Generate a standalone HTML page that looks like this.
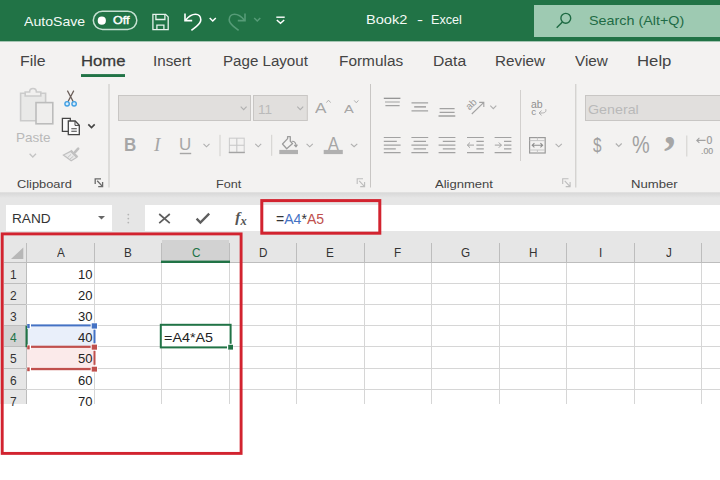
<!DOCTYPE html>
<html lang="en">
<head>
<meta charset="utf-8">
<title>Book2 - Excel</title>
<style>
html,body{margin:0;padding:0;}
body{width:720px;height:480px;overflow:hidden;background:#fff;position:relative;font-family:"Liberation Sans",sans-serif;}
.a{position:absolute;}
.t{position:absolute;white-space:pre;transform-origin:0 0;display:block;}
#titlebar{left:0;top:0;width:720px;height:41px;background:#217346;}
#search{left:534px;top:5px;width:186px;height:32px;background:#9ecab2;}
#ribbon{left:0;top:41px;width:720px;height:152px;background:#f3f2f1;border-top:1px solid #a5c5b3;box-sizing:border-box;}
#shadow{left:0;top:192px;width:720px;height:6px;background:linear-gradient(#e6e5e4 0,#d9d9d9 20%,#e6e6e6 100%);}
#fbar{left:0;top:198px;width:720px;height:39px;background:#e6e6e6;}
#namebox{left:6px;top:205px;width:106px;height:26px;background:#fff;}
#finput{left:145px;top:205px;width:575px;height:26px;background:#fff;}
#sheet{left:0;top:237px;width:720px;height:167px;overflow:hidden;background:#fff;}
#homeul{left:81px;top:74px;width:44px;height:3px;background:linear-gradient(#4d8f6b 0,#217346 30%,#217346 90%,#7fae95 100%);top:73.5px;}
svg{position:absolute;left:0;top:0;}
</style>
</head>
<body>
<div class="a" id="titlebar"></div>
<div class="a" id="search"></div>
<div class="a" id="ribbon"></div>
<div class="a" id="homeul"></div>
<div class="a" id="shadow"></div>
<div class="a" id="fbar"></div>
<div class="a" id="namebox"></div>
<div class="a" id="finput"></div>
<div class="a" id="sheet"></div>

<svg width="720" height="404" viewBox="0 0 720 404">
<rect x="0" y="237" width="720" height="26" fill="#e6e6e6"/>
<rect x="0" y="262" width="27" height="142" fill="#e6e6e6"/>
<rect x="162" y="240" width="67" height="22" fill="#d2d2d2"/>
<rect x="4" y="326" width="22" height="20" fill="#d2d2d2"/>
<rect x="27" y="326" width="68" height="21" fill="#e9effa"/>
<rect x="27" y="347" width="68" height="22" fill="#fbeaea"/>
<rect x="26" y="243" width="1" height="19" fill="#bdbdbd"/>
<rect x="26" y="262" width="1" height="142" fill="#bdbdbd"/>
<rect x="94" y="243" width="1" height="19" fill="#bdbdbd"/>
<rect x="94" y="262" width="1" height="142" fill="#d6d6d6"/>
<rect x="161" y="243" width="1" height="19" fill="#bdbdbd"/>
<rect x="161" y="262" width="1" height="142" fill="#d6d6d6"/>
<rect x="229" y="243" width="1" height="19" fill="#bdbdbd"/>
<rect x="229" y="262" width="1" height="142" fill="#d6d6d6"/>
<rect x="296" y="243" width="1" height="19" fill="#bdbdbd"/>
<rect x="296" y="262" width="1" height="142" fill="#d6d6d6"/>
<rect x="364" y="243" width="1" height="19" fill="#bdbdbd"/>
<rect x="364" y="262" width="1" height="142" fill="#d6d6d6"/>
<rect x="431" y="243" width="1" height="19" fill="#bdbdbd"/>
<rect x="431" y="262" width="1" height="142" fill="#d6d6d6"/>
<rect x="499" y="243" width="1" height="19" fill="#bdbdbd"/>
<rect x="499" y="262" width="1" height="142" fill="#d6d6d6"/>
<rect x="566" y="243" width="1" height="19" fill="#bdbdbd"/>
<rect x="566" y="262" width="1" height="142" fill="#d6d6d6"/>
<rect x="634" y="243" width="1" height="19" fill="#bdbdbd"/>
<rect x="634" y="262" width="1" height="142" fill="#d6d6d6"/>
<rect x="701" y="243" width="1" height="19" fill="#bdbdbd"/>
<rect x="701" y="262" width="1" height="142" fill="#d6d6d6"/>
<rect x="26" y="262" width="694" height="1" fill="#bdbdbd"/>
<rect x="4" y="262" width="22" height="1" fill="#bdbdbd"/>
<rect x="26" y="283" width="694" height="1" fill="#d6d6d6"/>
<rect x="4" y="283" width="22" height="1" fill="#bdbdbd"/>
<rect x="26" y="304" width="694" height="1" fill="#d6d6d6"/>
<rect x="4" y="304" width="22" height="1" fill="#bdbdbd"/>
<rect x="26" y="325" width="694" height="1" fill="#d6d6d6"/>
<rect x="4" y="325" width="22" height="1" fill="#bdbdbd"/>
<rect x="26" y="346" width="694" height="1" fill="#d6d6d6"/>
<rect x="4" y="346" width="22" height="1" fill="#bdbdbd"/>
<rect x="26" y="368" width="694" height="1" fill="#d6d6d6"/>
<rect x="4" y="368" width="22" height="1" fill="#bdbdbd"/>
<rect x="26" y="389" width="694" height="1" fill="#d6d6d6"/>
<rect x="4" y="389" width="22" height="1" fill="#bdbdbd"/>
<rect x="26" y="410" width="694" height="1" fill="#d6d6d6"/>
<rect x="4" y="410" width="22" height="1" fill="#bdbdbd"/>
<rect x="161" y="260.6" width="69" height="2.4" fill="#217346"/>
<rect x="25.5" y="325.6" width="2.2" height="21.6" fill="#217346"/>
<path d="M23.3,247.5 V259 H11 Z" fill="#b7b7b7"/>
<rect x="31.0" y="324.4" width="59.8" height="2" fill="#4472c4"/>
<rect x="31.0" y="345.7" width="59.8" height="2.2" fill="#c0504d"/>
<rect x="31.0" y="367.9" width="59.8" height="2.3" fill="#c0504d"/>
<rect x="93.5" y="329.6" width="2" height="13.8" fill="#4472c4"/>
<rect x="93.5" y="350.8" width="2" height="14" fill="#c0504d"/>
<rect x="90.80" y="322.60" width="7.00" height="6.80" fill="#fff"/>
<rect x="27.00" y="323.60" width="4.00" height="5.20" fill="#fff"/>
<rect x="90.80" y="343.60" width="7.00" height="6.80" fill="#fff"/>
<rect x="27.00" y="344.60" width="4.00" height="5.20" fill="#fff"/>
<rect x="90.80" y="365.60" width="7.00" height="6.80" fill="#fff"/>
<rect x="27.00" y="366.60" width="4.00" height="5.20" fill="#fff"/>
<rect x="91.70" y="323.30" width="5.30" height="5.30" fill="#4472c4"/>
<rect x="27.20" y="324.00" width="2.50" height="4.20" fill="#4472c4"/>
<rect x="91.70" y="344.60" width="5.30" height="5.10" fill="#c0504d"/>
<rect x="27.20" y="345.40" width="2.50" height="4.00" fill="#c0504d"/>
<rect x="91.70" y="366.70" width="5.30" height="4.90" fill="#c0504d"/>
<rect x="27.20" y="367.40" width="2.50" height="3.80" fill="#c0504d"/>
<rect x="160.8" y="324.8" width="69.79999999999998" height="22.6" fill="#fff" stroke="#217346" stroke-width="2"/>
<rect x="227.0" y="343.8" width="6.2" height="6" fill="#fff"/>
<rect x="228.2" y="344.8" width="4.8" height="4.8" fill="#217346"/>
</svg>

<svg width="720" height="480" viewBox="0 0 720 480" fill="none" stroke-linecap="butt" stroke-linejoin="miter">
<!-- title bar: autosave toggle -->
<rect x="93.3" y="11.2" width="43.5" height="18.2" rx="9.1" stroke="#c4e0d1" stroke-width="1.5"/>
<circle cx="101.8" cy="20.7" r="4.1" fill="#fff"/>
<!-- save -->
<g stroke="#e6f2ec" stroke-width="1.3">
<path d="M152.9,14.3 H165.6 L168.2,16.9 V29.7 H152.9 Z"/>
<path d="M155.9,14.3 V19.5 H164.9 V14.3"/>
<path d="M156.9,29.7 V25.1 H163.9 V29.7"/>
</g>
<!-- undo -->
<g stroke="#fff" stroke-width="1.6">
<path d="M185,13.4 V20.6 H192.2"/>
<path d="M185.3,20.4 C188.5,16.5 192,14.2 195.5,14.2 C198.8,14.2 200.8,16.8 200.8,19.8 C200.8,22.5 199,24.3 196.5,26.3 L191.4,30.4"/>
<path d="M209.7,18 L212.75,21 L215.8,18" stroke-width="1.5"/>
</g>
<!-- redo (disabled) -->
<g stroke="#569b77" stroke-width="1.6">
<path d="M245,13.4 V20.6 H237.8"/>
<path d="M244.7,20.4 C241.5,16.5 238,14.2 234.5,14.2 C231.2,14.2 229.2,16.8 229.2,19.8 C229.2,22.5 231,24.3 233.5,26.3 L238.6,30.4"/>
<path d="M254.2,18 L257.25,21 L260.3,18" stroke-width="1.5"/>
</g>
<!-- customize qat -->
<g stroke="#fff" stroke-width="1.4">
<path d="M276.3,17.2 H284.7"/>
<path d="M276.8,19.9 L280.5,23.3 L284.2,19.9"/>
</g>
<!-- search icon -->
<g stroke="#1e6a43" stroke-width="1.4">
<circle cx="565.8" cy="18.3" r="4.9"/>
<path d="M562.4,21.9 L556.7,27.8"/>
</g>

<!-- ribbon separators -->
<g fill="#c8c6c4">
<rect x="108.5" y="84" width="1" height="103.5"/>
<rect x="370" y="84" width="1" height="103.5"/>
<rect x="575.3" y="84" width="1" height="103.5"/>
<rect x="219.5" y="134.8" width="1" height="21.4" fill="#d2d0ce"/>
<rect x="271.2" y="134.8" width="1" height="21" fill="#d2d0ce"/>
<rect x="520" y="90" width="1" height="71" fill="#d2d0ce"/>
<rect x="686.3" y="135.5" width="1" height="21" fill="#d2d0ce"/>
</g>

<!-- paste icon -->
<g stroke="#cbcbcb" stroke-width="1.6">
<path d="M20.6,93.2 H45.6 V120.8 H20.6 Z" fill="#e9e9e8"/>
<path d="M25.2,96 V92 H29.6 C29.6,87.4 36.4,87.4 36.4,92 H40.8 V96 Z" fill="#f1f0ef"/>
<rect x="36" y="102.6" width="16.8" height="21.2" fill="#efeeed" stroke="#bcbcbc"/>
</g>
<path d="M29.6,153.8 L32.8,157 L36,153.8" stroke="#c4c4c4" stroke-width="1.3"/>
<!-- scissors -->
<g stroke-width="1.2">
<path d="M67.4,90.6 L73.2,101.6 M73.8,90.6 L68,101.6" stroke="#6b5f5a"/>
<circle cx="67.1" cy="103.8" r="2.2" stroke="#3f9fe3" stroke-width="1.4" fill="#d9edfb"/>
<circle cx="74.1" cy="103.8" r="2.2" stroke="#3f9fe3" stroke-width="1.4" fill="#d9edfb"/>
</g>
<!-- copy -->
<g stroke="#444" stroke-width="1.3">
<path d="M68,131.3 H62.4 V118.3 H70.3 V121" fill="#fafafa"/>
<path d="M68.3,121 H75.2 L79.3,125.2 V134.6 H68.3 Z" fill="#fafafa"/>
<path d="M75,121.2 V125.4 H79.2" stroke-width="1"/>
<path d="M71.3,128.7 H76.8 M71.3,131.3 H76.8" stroke-width="1.1"/>
<path d="M88.3,124.4 L91.5,127.6 L94.7,124.4" stroke-width="1.6"/>
</g>
<!-- format painter -->
<g stroke="#c0c0c0" stroke-width="1.2">
<path d="M78.2,148.6 L75,152.2" stroke-width="2.6" stroke-linecap="round"/>
<path d="M70.6,151.4 L63.4,155 L71.2,160.8 L76.6,157.4 Z" fill="#e9e9e9"/>
<path d="M70.8,150.4 L77.6,157" stroke-width="1.8"/>
<path d="M67.4,157.8 L71,154.4 M69.6,159.4 L73.4,156.2" stroke-width="0.9"/>
</g>
<!-- launchers -->
<g stroke="#6a6a6a" stroke-width="1.3">
<path d="M95.2,184 V178.8 H101 M97.2,180.8 L102.4,186.4 M102.6,182 V186.6 H98.2"/>
</g>
<g stroke="#bdbdbd" stroke-width="1.1">
<path d="M357.2,184 V178.8 H363 M359.2,180.8 L364.4,186.4 M364.6,182 V186.6 H360.2"/>
<path d="M562.7,184 V178.8 H568.5 M564.7,180.8 L569.9,186.4 M570.1,182 V186.6 H565.7"/>
</g>

<!-- combos -->
<g fill="#e1dfdd" stroke="#c8c6c4" stroke-width="1">
<rect x="118.5" y="95.5" width="132" height="25"/>
<rect x="253.5" y="95.5" width="53.8" height="25"/>
<rect x="585.5" y="95.5" width="140" height="25"/>
</g>
<g stroke="#b0b0b0" stroke-width="1.15">
<path d="M240.7,106.7 L243.65,109.6 L246.6,106.7"/>
<path d="M297.3,106.7 L300.25,109.6 L303.2,106.7"/>
<path d="M326.4,102.6 L328.5,100.2 L330.6,102.6" stroke-width="1"/>
<path d="M354.2,100.4 L356.3,102.8 L358.4,100.4" stroke-width="1"/>
<path d="M203.5,143.9 L206.5,146.8 L209.5,143.9"/>
<path d="M255.3,143.9 L258.25,146.8 L261.2,143.9"/>
<path d="M306.6,143.9 L309.7,146.8 L312.8,143.9"/>
<path d="M350.9,143.9 L354.1,146.8 L357.3,143.9"/>
<path d="M490.3,105.6 L493.3,108.6 L496.3,105.6"/>
<path d="M555.6,143.9 L558.7,146.8 L561.8,143.9"/>
<path d="M615.8,143.5 L618.75,146.4 L621.7,143.5"/>
</g>
<!-- underline of U -->
<rect x="179.8" y="152.8" width="11.4" height="1.4" fill="#a6a6a6"/>
<!-- borders icon -->
<g stroke="#c6c6c6" stroke-width="1.1">
<rect x="229.4" y="138.2" width="14.8" height="14.2" stroke="#cdcdcd"/>
<path d="M236.8,138.2 V152.4 M229.4,145.3 H244.2"/>
<path d="M228.8,152.5 H244.8" stroke="#a4a4a4" stroke-width="1.4"/>
</g>
<!-- fill bucket -->
<g stroke="#9c9c9c" stroke-width="1.3" stroke-linejoin="round">
<path d="M282.5,144 L287.6,138.6 V136.6 H290.3 V141.2 L292.6,143.6 L286.7,148.7 Z" fill="#f3f2f1"/>
<path d="M291.8,141.3 C294.8,141.2 296.2,143 296,146.4 M294.2,144.8 L296,146.9 L297.4,144.6" stroke-width="1.1"/>
</g>
<rect x="279.3" y="149.9" width="18.7" height="4.2" fill="#b0b0b0"/>
<!-- font colour bar -->
<rect x="323.7" y="149.9" width="19.1" height="4.2" fill="#b0b0b0"/>

<!-- alignment icons -->
<g stroke="#a2a2a2" stroke-width="1.2">
<path d="M383.8,98.3 H400.4" stroke="#8c8c8c"/>
<path d="M385,102 H399.8 M385.4,105.6 H399.6"/>
<path d="M411.5,102.9 H428.1 M411.5,110.8 H428.1"/>
<path d="M414.2,106.9 H426" stroke="#8c8c8c"/>
<path d="M439.6,108.7 H454.6 M439.6,112.4 H454.6"/>
<path d="M438.5,116 H455.3" stroke="#8c8c8c"/>
<!-- row2 left -->
<path d="M383.8,137.5 H400.6 M383.8,141.3 H396.8 M383.8,145.1 H400.6 M383.8,148.9 H395.8 M383.8,152.7 H400.6"/>
<path d="M411.4,137.5 H428.2 M413.6,141.3 H426 M411.4,145.1 H428.2 M413.6,148.9 H426 M411.4,152.7 H428.2"/>
<path d="M438.6,137.5 H455.4 M442.8,141.3 H455.4 M438.6,145.1 H455.4 M442.8,148.9 H455.4 M438.6,152.7 H455.4"/>
<!-- decrease indent -->
<path d="M467,137.5 H483.8 M476.4,141.3 H483.8 M476.4,145.1 H483.8 M476.4,148.9 H483.8 M467,152.7 H483.8"/>
<path d="M467.4,145.1 H474 M470,142.5 L467.4,145.1 L470,147.7" stroke-width="1"/>
<!-- increase indent -->
<path d="M494.6,137.5 H511.4 M504,141.3 H511.4 M504,145.1 H511.4 M504,148.9 H511.4 M494.6,152.7 H511.4"/>
<path d="M494.8,145.1 H501.4 M498.8,142.5 L501.4,145.1 L498.8,147.7" stroke-width="1"/>
<!-- orientation arrow -->
<path d="M471.8,114 L483.6,102.6 M479.2,102.4 H483.8 V107" stroke-width="1.1"/>
<!-- wrap arrow -->
<path d="M545.8,109.2 C546.4,112.6 544.4,113.2 539.2,113 M541.6,110.6 L539,113 L541.6,115.4" stroke-width="1" stroke="#b0b0b0"/>
<!-- merge -->
<rect x="529.6" y="137.6" width="15.6" height="15.4" stroke-width="1.2" stroke="#9a9a9a"/>
<path d="M529.6,140.6 H545.2 M529.6,150 H545.2 M537.4,137.6 V140.6 M537.4,150 V153" stroke-width="0.9" stroke="#c2c2c2"/>
<path d="M532.2,145.3 H542.6 M534.4,143.2 L532.2,145.3 L534.4,147.4 M540.4,143.2 L542.6,145.3 L540.4,147.4" stroke-width="1.1" stroke="#8e8e8e"/>
<!-- decimal arrow -->
<path d="M696.8,140.4 H705.6 M699.4,137.9 L696.8,140.4 L699.4,142.9" stroke-width="1.1"/>
</g>

<!-- formula bar icons -->
<path d="M98,216 H105 L101.5,219.6 Z" fill="#666"/>
<g fill="#b5b5b5"><circle cx="128.3" cy="214.6" r="0.9"/><circle cx="128.3" cy="218.6" r="0.9"/><circle cx="128.3" cy="222.6" r="0.9"/></g>
<path d="M159.2,214 L169.8,223.2 M169.8,214 L159.2,223.2" stroke="#5e5e5e" stroke-width="1.7"/>
<path d="M196.6,218.6 L200.4,222.6 L209.2,213.6" stroke="#5e5e5e" stroke-width="2.3"/>
</svg>


<span class="t" style="left:24.25px;top:15.94px;font-size:12.90px;line-height:12.90px;color:#f4faf6;transform:scaleX(1.0952);">AutoSave</span>
<span class="t" style="left:112.97px;top:16.35px;font-size:10.04px;line-height:10.04px;color:#fff;transform:scaleX(1.2480);-webkit-text-stroke:0.4px #fff;">Off</span>
<span class="t" style="left:366.33px;top:12.67px;font-size:13.33px;line-height:13.33px;color:#f4faf6;transform:scaleX(1.0935);">Book2</span>
<span class="t" style="left:416.78px;top:12.67px;font-size:13.33px;line-height:13.33px;color:#f4faf6;transform:scaleX(1.3500);">-</span>
<span class="t" style="left:430.99px;top:12.67px;font-size:13.33px;line-height:13.33px;color:#f4faf6;transform:scaleX(0.9444);">Excel</span>
<span class="t" style="left:589.43px;top:13.81px;font-size:13.04px;line-height:13.04px;color:#1f6b45;transform:scaleX(1.1006);">Search (Alt+Q)</span>
<span class="t" style="left:19.98px;top:53.68px;font-size:14.49px;line-height:14.49px;color:#444;transform:scaleX(1.0960);">File</span>
<span class="t" style="left:81.02px;top:53.68px;font-size:14.49px;line-height:14.49px;color:#3a3a3a;transform:scaleX(1.1494);-webkit-text-stroke:0.28px #3a3a3a;">Home</span>
<span class="t" style="left:152.88px;top:53.68px;font-size:14.49px;line-height:14.49px;color:#444;transform:scaleX(1.0508);">Insert</span>
<span class="t" style="left:222.54px;top:53.68px;font-size:14.49px;line-height:14.49px;color:#444;transform:scaleX(1.0435);">Page Layout</span>
<span class="t" style="left:338.77px;top:53.68px;font-size:14.49px;line-height:14.49px;color:#444;transform:scaleX(1.0629);">Formulas</span>
<span class="t" style="left:432.74px;top:53.68px;font-size:14.49px;line-height:14.49px;color:#444;transform:scaleX(1.0844);">Data</span>
<span class="t" style="left:494.78px;top:53.68px;font-size:14.49px;line-height:14.49px;color:#444;transform:scaleX(1.0544);">Review</span>
<span class="t" style="left:575.00px;top:53.68px;font-size:14.49px;line-height:14.49px;color:#444;transform:scaleX(1.0555);">View</span>
<span class="t" style="left:637.16px;top:53.68px;font-size:14.49px;line-height:14.49px;color:#444;transform:scaleX(1.1556);">Help</span>
<span class="t" style="left:16.86px;top:178.73px;font-size:11.82px;line-height:11.82px;color:#444;transform:scaleX(1.0845);">Clipboard</span>
<span class="t" style="left:216.49px;top:178.73px;font-size:11.82px;line-height:11.82px;color:#444;transform:scaleX(1.0669);">Font</span>
<span class="t" style="left:435.00px;top:178.73px;font-size:11.82px;line-height:11.82px;color:#444;transform:scaleX(1.1031);">Alignment</span>
<span class="t" style="left:630.95px;top:178.73px;font-size:11.82px;line-height:11.82px;color:#444;transform:scaleX(1.1115);">Number</span>
<span class="t" style="left:15.92px;top:131.42px;font-size:13.62px;line-height:13.62px;color:#b9b9b9;transform:scaleX(0.9924);">Paste</span>
<span class="t" style="left:257.55px;top:103.96px;font-size:12.75px;line-height:12.75px;color:#bababa;transform:scaleX(1.0631);">11</span>
<span class="t" style="left:587.99px;top:102.91px;font-size:13.04px;line-height:13.04px;color:#b9b9b9;transform:scaleX(1.0947);">General</span>
<span class="t" style="left:124.28px;top:136.79px;font-size:17.43px;line-height:17.43px;color:#a6a6a6;transform:scaleX(0.9717);font-weight:700;">B</span>
<span class="t" style="left:154.37px;top:134.87px;font-size:19.08px;line-height:19.08px;color:#a6a6a6;transform:scaleX(0.9977);font-style:italic;font-family:'Liberation Serif', serif;">I</span>
<span class="t" style="left:179.26px;top:136.22px;font-size:17.22px;line-height:17.22px;color:#a6a6a6;transform:scaleX(0.9848);">U</span>
<span class="t" style="left:314.70px;top:99.67px;font-size:15.55px;line-height:15.55px;color:#a6a6a6;transform:scaleX(1.1040);">A</span>
<span class="t" style="left:343.90px;top:103.63px;font-size:11.82px;line-height:11.82px;color:#a6a6a6;transform:scaleX(1.2376);">A</span>
<span class="t" style="left:327.80px;top:135.57px;font-size:17.68px;line-height:17.68px;color:#a6a6a6;transform:scaleX(0.9201);">A</span>
<span class="t" style="left:592.95px;top:135.09px;font-size:20.37px;line-height:20.37px;color:#a0a0a0;transform:scaleX(0.7504);">$</span>
<span class="t" style="left:632.32px;top:134.24px;font-size:23.08px;line-height:23.08px;color:#a0a0a0;transform:scaleX(0.8613);">%</span>
<span class="t" style="left:11.91px;top:211.61px;font-size:13.41px;line-height:13.41px;color:#333;transform:scaleX(1.0180);">RAND</span>
<span class="t" style="left:275.82px;top:213.41px;font-size:13.79px;line-height:13.79px;color:#333;transform:scaleX(1.0192);">=<span style="color:#4472c4">A4</span>*<span style="color:#c0504d">A5</span></span>
<span class="t" style="left:56.87px;top:246.76px;font-size:12.75px;line-height:12.75px;color:#333;transform:scaleX(0.9200);">A</span>
<span class="t" style="left:124.19px;top:246.76px;font-size:12.75px;line-height:12.75px;color:#333;transform:scaleX(0.9200);">B</span>
<span class="t" style="left:192.26px;top:246.76px;font-size:12.75px;line-height:12.75px;color:#217346;transform:scaleX(0.9200);">C</span>
<span class="t" style="left:258.84px;top:246.76px;font-size:12.75px;line-height:12.75px;color:#333;transform:scaleX(0.9200);">D</span>
<span class="t" style="left:325.93px;top:246.76px;font-size:12.75px;line-height:12.75px;color:#333;transform:scaleX(0.9200);">E</span>
<span class="t" style="left:394.43px;top:246.76px;font-size:12.75px;line-height:12.75px;color:#333;transform:scaleX(0.9200);">F</span>
<span class="t" style="left:461.34px;top:246.76px;font-size:12.75px;line-height:12.75px;color:#333;transform:scaleX(0.9200);">G</span>
<span class="t" style="left:529.02px;top:246.76px;font-size:12.75px;line-height:12.75px;color:#333;transform:scaleX(0.9200);">H</span>
<span class="t" style="left:599.16px;top:246.76px;font-size:12.75px;line-height:12.75px;color:#333;transform:scaleX(0.9200);">I</span>
<span class="t" style="left:665.72px;top:246.76px;font-size:12.75px;line-height:12.75px;color:#333;transform:scaleX(0.9200);">J</span>
<span class="t" style="left:9.52px;top:268.31px;font-size:13.04px;line-height:13.04px;color:#333;transform:scaleX(0.9200);">1</span>
<span class="t" style="left:77.96px;top:268.31px;font-size:13.04px;line-height:13.04px;color:#222;transform:scaleX(1.0000);">10</span>
<span class="t" style="left:9.64px;top:289.31px;font-size:13.04px;line-height:13.04px;color:#333;transform:scaleX(0.9200);">2</span>
<span class="t" style="left:77.96px;top:289.31px;font-size:13.04px;line-height:13.04px;color:#222;transform:scaleX(1.0000);">20</span>
<span class="t" style="left:9.70px;top:310.31px;font-size:13.04px;line-height:13.04px;color:#333;transform:scaleX(0.9200);">3</span>
<span class="t" style="left:77.96px;top:310.31px;font-size:13.04px;line-height:13.04px;color:#222;transform:scaleX(1.0000);">30</span>
<span class="t" style="left:9.70px;top:331.31px;font-size:13.04px;line-height:13.04px;color:#217346;transform:scaleX(0.9200);">4</span>
<span class="t" style="left:77.96px;top:331.31px;font-size:13.04px;line-height:13.04px;color:#222;transform:scaleX(1.0000);">40</span>
<span class="t" style="left:9.64px;top:352.31px;font-size:13.04px;line-height:13.04px;color:#333;transform:scaleX(0.9200);">5</span>
<span class="t" style="left:77.96px;top:352.31px;font-size:13.04px;line-height:13.04px;color:#222;transform:scaleX(1.0000);">50</span>
<span class="t" style="left:9.58px;top:374.31px;font-size:13.04px;line-height:13.04px;color:#333;transform:scaleX(0.9200);">6</span>
<span class="t" style="left:77.96px;top:374.31px;font-size:13.04px;line-height:13.04px;color:#222;transform:scaleX(1.0000);">60</span>
<span class="t" style="left:9.64px;top:395.31px;font-size:13.04px;line-height:13.04px;color:#333;transform:scaleX(0.9200);">7</span>
<span class="t" style="left:77.96px;top:395.31px;font-size:13.04px;line-height:13.04px;color:#222;transform:scaleX(1.0000);">70</span>
<span class="t" style="left:164.43px;top:331.04px;font-size:13.48px;line-height:13.48px;color:#222;transform:scaleX(1.0652);">=A4*A5</span>

<span class="t" style="left:235.2px;top:208.7px;font-size:15.5px;line-height:16px;color:#555;font-family:'Liberation Serif',serif;font-style:italic;font-weight:700;">f</span>
<span class="t" style="left:240.4px;top:214.6px;font-size:12.5px;line-height:12.5px;color:#555;font-family:'Liberation Serif',serif;font-style:italic;font-weight:700;">x</span>
<span class="t" style="left:664px;top:105.4px;font-size:47px;line-height:47px;color:#a6a6a6;font-family:'Liberation Serif',serif;font-weight:700;">,</span>
<span class="t" style="left:531px;top:99.4px;font-size:10.5px;line-height:10.5px;color:#8f8f8f;">ab</span>
<span class="t" style="left:531.2px;top:107.2px;font-size:9.8px;line-height:9.8px;color:#8f8f8f;">c</span>
<span class="t" style="left:470.6px;top:101.5px;font-size:10px;line-height:10px;color:#9a9a9a;transform:rotate(-45deg);transform-origin:0 100%;">ab</span>
<span class="t" style="left:706.4px;top:135.8px;font-size:10.4px;line-height:10.4px;color:#9a9a9a;-webkit-text-stroke:0.2px #9a9a9a;">0</span>
<span class="t" style="left:700.6px;top:146px;font-size:9.4px;line-height:9.4px;color:#9a9a9a;-webkit-text-stroke:0.2px #9a9a9a;transform:scaleX(0.93);">.00</span>


<svg width="720" height="480" viewBox="0 0 720 480" fill="none">
<rect x="2.2" y="233.9" width="238.9" height="219.5" stroke="#d2232f" stroke-width="2.9"/>
<rect x="261.8" y="200.6" width="118" height="32.6" stroke="#d2232f" stroke-width="3"/>
</svg>

</body>
</html>
